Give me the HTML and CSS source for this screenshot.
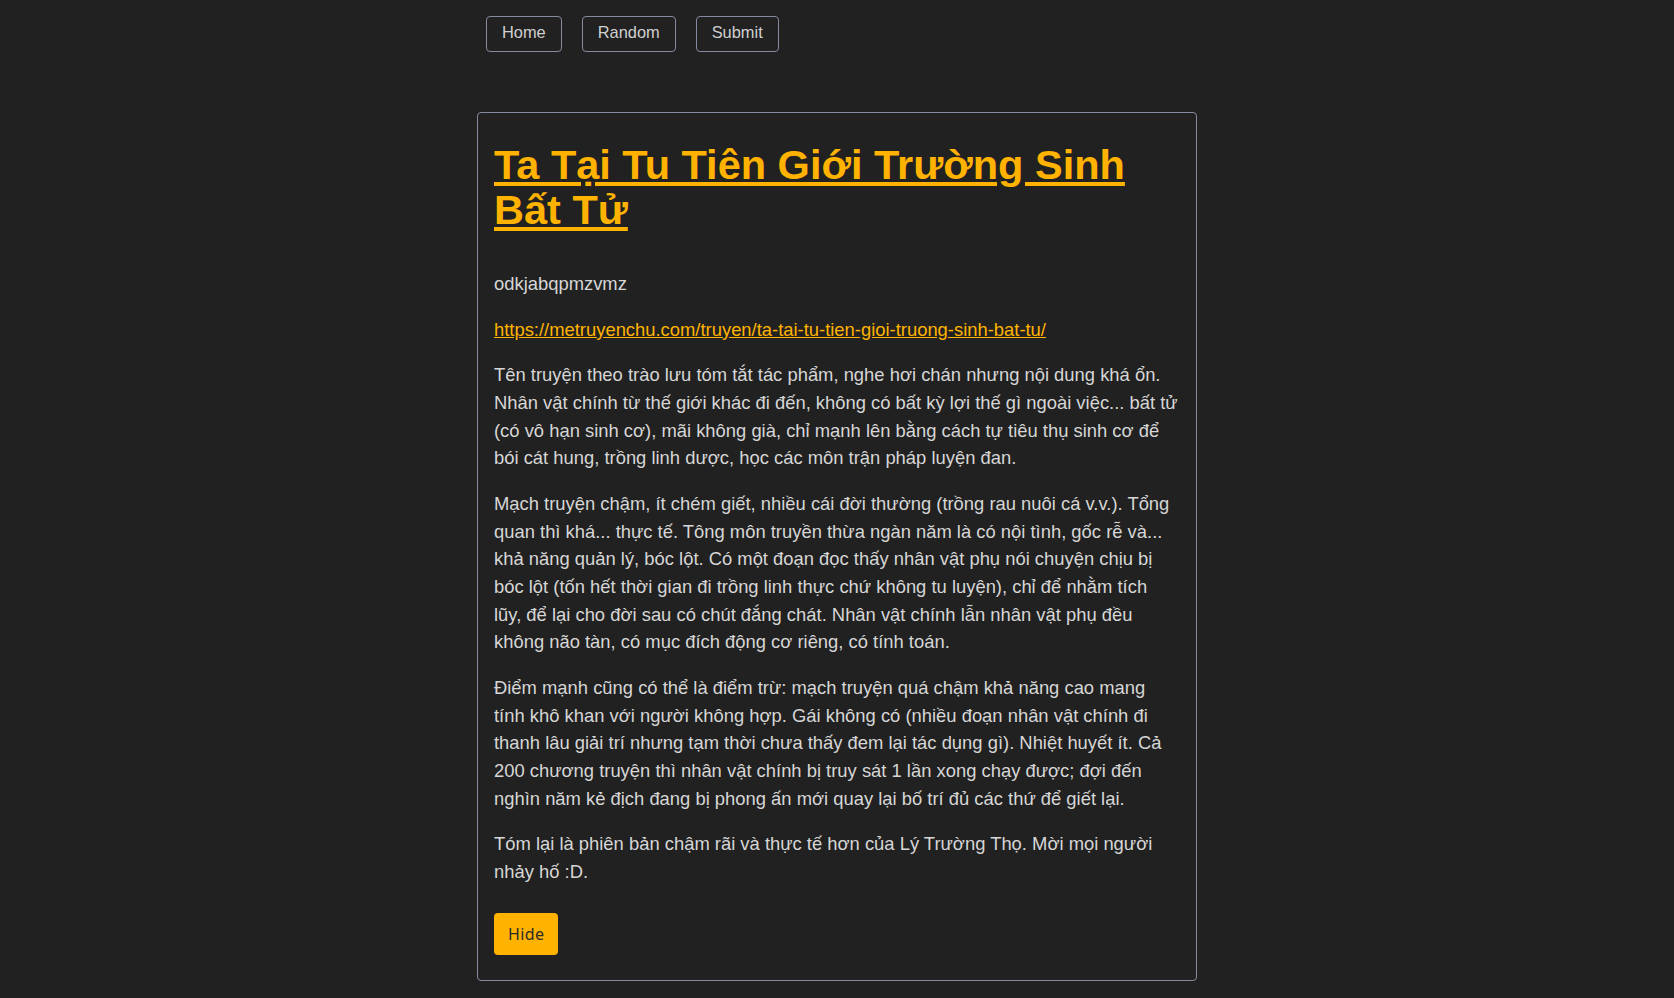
FILE: index.html
```html
<!DOCTYPE html>
<html lang="vi">
<head>
<meta charset="utf-8">
<title>Ta Tại Tu Tiên Giới Trường Sinh Bất Tử</title>
<link rel="stylesheet" href="styles.css">
</head>
<body>
<div class="page">
  <nav class="nav">
    <a class="nav-btn" href="#">Home</a>
    <a class="nav-btn" href="#">Random</a>
    <a class="nav-btn" href="#">Submit</a>
  </nav>
  <article class="card">
    <h1 class="title"><a href="#">Ta Tại Tu Tiên Giới Trường Sinh Bất Tử</a></h1>
    <p>odkjabqpmzvmz</p>
    <p><a class="link" href="#">https://metruyenchu.com/truyen/ta-tai-tu-tien-gioi-truong-sinh-bat-tu/</a></p>
    <p>Tên truyện theo trào lưu tóm tắt tác phẩm, nghe hơi chán nhưng nội dung khá ổn. Nhân vật chính từ thế giới khác đi đến, không có bất kỳ lợi thế gì ngoài việc... bất tử (có vô hạn sinh cơ), mãi không già, chỉ mạnh lên bằng cách tự tiêu thụ sinh cơ để bói cát hung, trồng linh dược, học các môn trận pháp luyện đan.</p>
    <p>Mạch truyện chậm, ít chém giết, nhiều cái đời thường (trồng rau nuôi cá v.v.). Tổng quan thì khá... thực tế. Tông môn truyền thừa ngàn năm là có nội tình, gốc rễ và... khả năng quản lý, bóc lột. Có một đoạn đọc thấy nhân vật phụ nói chuyện chịu bị bóc lột (tốn hết thời gian đi trồng linh thực chứ không tu luyện), chỉ để nhằm tích lũy,&nbsp;để lại cho đời sau có chút đắng chát. Nhân vật chính lẫn nhân vật phụ đều không não tàn, có mục đích động cơ riêng, có tính toán.</p>
    <p>Điểm mạnh cũng có thể là điểm trừ: mạch truyện quá chậm khả năng cao mang tính khô khan với người không hợp. Gái không có (nhiều đoạn nhân vật chính đi thanh lâu giải trí nhưng tạm thời chưa thấy đem lại tác dụng gì). Nhiệt huyết ít. Cả 200 chương truyện thì nhân vật chính bị truy sát 1 lần xong chạy được; đợi đến nghìn năm kẻ địch đang bị phong ấn mới quay lại bố trí đủ các thứ để giết lại.</p>
    <p>Tóm lại là phiên bản chậm rãi và thực tế hơn của Lý Trường Thọ. Mời mọi người nhảy hố :D.</p>
    <button class="hide-btn" type="button">Hide</button>
  </article>
</div>
</body>
</html>
```
FILE: styles.css
```css
html, body {
  margin: 0;
  padding: 0;
  background: #212121;
}
body {
  font-family: "Liberation Sans", Arial, sans-serif;
  color: #d6d6d6;
}
.page {
  width: 720px;
  margin: 0 auto;
}
.nav {
  display: flex;
  gap: 20px;
  padding: 16px 9px 0;
  height: 36px;
}
.nav-btn {
  display: flex;
  align-items: center;
  height: 31px;
  box-sizing: content-box;
  padding: 0 15px 3px;
  border: 1px solid #868aa0;
  border-radius: 4px;
  color: #d0d0d0;
  text-decoration: none;
  font-size: 16.4px;
}
.card {
  margin-top: 60px;
  border: 1px solid #868aa0;
  border-radius: 4px;
  padding: 16px 17px 25px 16px;
}
.title {
  margin: 13px 0 38px;
  font-size: 41.5px;
  line-height: 45px;
  font-weight: bold;
}
.title a {
  color: #ffb300;
}
.card p {
  margin: 18px 0;
  font-size: 18.4px;
  line-height: 27.65px;
}
.link {
  color: #ffb300;
}
.hide-btn {
  margin-top: 28px;
  height: 42px;
  padding: 0 14px;
  border: none;
  border-radius: 4px;
  background: #ffb300;
  color: #2a2a2a;
  font-family: "Noto Sans", sans-serif;
  font-size: 16px;
  letter-spacing: 0.4px;
  display: block;
}
```
